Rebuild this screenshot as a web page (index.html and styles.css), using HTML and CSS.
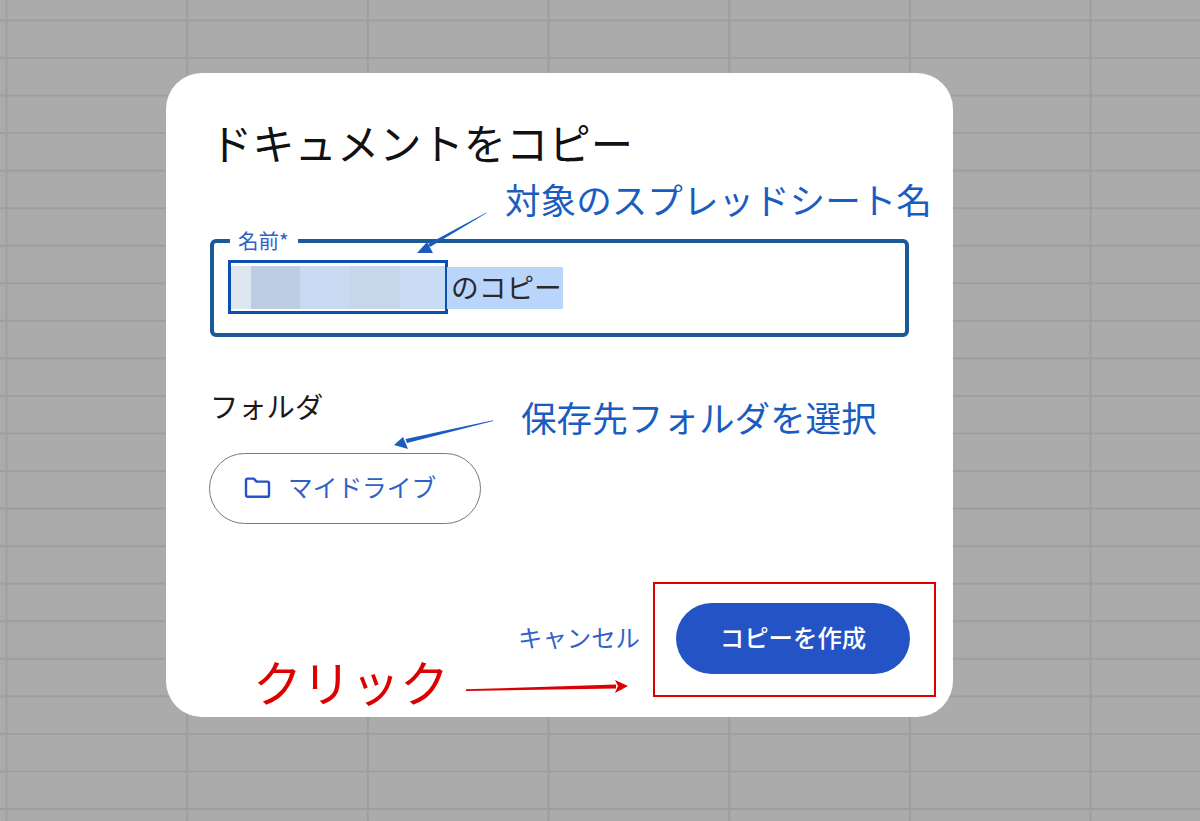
FILE: index.html
```html
<!DOCTYPE html>
<html lang="ja">
<head>
  <meta charset="utf-8">
  <title>ドキュメントをコピー</title>
  <link rel="stylesheet" href="styles.css">
</head>
<body>
  <div class="dialog">
    <h1 class="title">ドキュメントをコピー</h1>
    <div class="name-field">
      <span class="name-label">名前*</span>
      <div class="name-value">
        <div class="masked">
          <div class="tint tint-1"></div>
          <div class="tint tint-2"></div>
          <div class="tint tint-3"></div>
          <div class="tint tint-4"></div>
          <div class="tint tint-5"></div>
        </div>
        <span class="selected">のコピー</span>
      </div>
    </div>
    <div class="folder-label">フォルダ</div>
    <button class="folder-button">
      <svg class="folder-icon" xmlns="http://www.w3.org/2000/svg" viewBox="0 0 27 22" width="27" height="22" fill="none" stroke="#2453c6" stroke-width="2.4" stroke-linejoin="round">
        <path d="M2 3.2c0-.9.7-1.6 1.6-1.6h6.2l2.7 3h10.900c.9 0 1.600.7 1.600 1.600v12c0 .9-.7 1.600-1.600 1.600H3.600c-.9 0-1.600-.7-1.600-1.600z"/>
      </svg>
      <span class="folder-name">マイドライブ</span>
    </button>
    <div class="actions">
      <button class="cancel-button">キャンセル</button>
      <button class="create-button">コピーを作成</button>
    </div>

    <!-- annotations drawn on top of the dialog -->
    <div class="note note-name">対象のスプレッドシート名</div>
    <div class="note note-folder">保存先フォルダを選択</div>
    <div class="note-click">クリック</div>
    <div class="red-box"></div>
    <svg class="arrows" xmlns="http://www.w3.org/2000/svg" viewBox="0 0 787 644" width="787" height="644">
      <path d="M320 139.700 L320.300 140.300 L264 174 L262 171 Z" fill="#1a5cc0"/>
      <path d="M251 180 L261 169 L267 180 Z" fill="#1a5cc0"/>
      <path d="M327 347.300 L327.200 348 L241 370 L239.500 366 Z" fill="#1a5cc0"/>
      <path d="M228 372 L237 364 L242 376 Z" fill="#1a5cc0"/>
      <path d="M300 616.300 L450 611.500 L450 615.500 L300 618 Z" fill="#dd0000"/>
      <path d="M462 613 L449 607 L452 613 L449 620 Z" fill="#dd0000"/>
    </svg>
  </div>
</body>
</html>
```

FILE: styles.css
```css
html, body {
  height: 100%;
}
body {
  margin: 0;
  padding: 73px 0 0 166px;
  box-sizing: border-box;
  overflow: hidden;
  font-family: "Noto Sans CJK JP", "Noto Sans", sans-serif;
  background-color: #ababab;
  background-image:
    linear-gradient(to right, #9e9e9e 2px, transparent 2px),
    linear-gradient(to bottom, #9e9e9e 2px, transparent 2px);
  background-size: 180.7px 100%, 100% 37.55px;
  background-position: 5.500px 0, 0 19.500px;
}
button {
  font-family: inherit;
  cursor: pointer;
}
.dialog {
  position: relative;
  width: 787px;
  height: 644px;
  box-sizing: border-box;
  padding: 37px 44px 0 44px;
  background-color: #ffffff;
  border-radius: 36px;
  display: flex;
  flex-direction: column;
}
.title {
  margin: 0;
  font-size: 42.300px;
  line-height: 64px;
  font-weight: 400;
  color: #111111;
}
.name-field {
  position: relative;
  box-sizing: border-box;
  width: 699px;
  height: 98px;
  margin-top: 65px;
  border: 4px solid #1a5a96;
  border-radius: 6px;
  padding: 17px 0 0 14px;
}
.name-label {
  position: absolute;
  top: -17px;
  left: 16px;
  padding: 0 9px 0 8px;
  background-color: #ffffff;
  font-size: 20.500px;
  line-height: 28px;
  color: #2f62c8;
}
.name-value {
  display: flex;
  align-items: flex-end;
}
.masked {
  box-sizing: border-box;
  width: 220px;
  height: 54px;
  border: 3px solid #0b4fb3;
  padding: 3px 0 2px 0;
  display: flex;
}
.tint {
  height: 100%;
}
.tint-1 { width: 20px; background-color: #dde6ef; }
.tint-2 { width: 49px; background-color: #bccde3; }
.tint-3 { width: 50px; background-color: #c8daf2; }
.tint-4 { width: 50px; background-color: #c6d7ec; }
.tint-5 { flex: 1; background-color: #cadcf3; }
.selected {
  display: block;
  height: 42px;
  margin-bottom: 5px;
  margin-left: -1px;
  padding-left: 4px;
  width: 112px;
  background-color: #b9d5fb;
  font-size: 27.700px;
  line-height: 38px;
  color: #2a2a2a;
  white-space: nowrap;
}
.folder-label {
  margin: 49px 0 0 0;
  font-size: 28.300px;
  line-height: 40px;
  color: #1a1a1a;
}
.folder-button {
  box-sizing: border-box;
  width: 272px;
  height: 71px;
  margin: 27px 0 0 -1px;
  padding: 0 0 2px 34px;
  background: #ffffff;
  border: 1.500px solid #7a7a7a;
  border-radius: 36px;
  display: flex;
  align-items: center;
  gap: 17px;
  font-size: 24.700px;
  color: #2f62c8;
}
.folder-name {
  padding-bottom: 4px;
}
.actions {
  display: flex;
  justify-content: flex-end;
  align-items: center;
  gap: 36px;
  width: 700px;
  margin-top: 79px;
}
.cancel-button {
  padding: 0 0 4px 0;
  background: none;
  border: none;
  font-size: 24.400px;
  color: #2f62c8;
}
.create-button {
  width: 234px;
  height: 71px;
  padding: 0 0 4px 0;
  background-color: #2453c6;
  border: none;
  border-radius: 36px;
  font-size: 24.400px;
  font-weight: 500;
  color: #ffffff;
}
.note {
  position: absolute;
  color: #1a5cc0;
  white-space: nowrap;
}
.note-name {
  top: 100px;
  left: 339px;
  font-size: 35.600px;
  line-height: 52px;
}
.note-folder {
  top: 318px;
  left: 355px;
  font-size: 35.600px;
  line-height: 52px;
}
.note-click {
  position: absolute;
  top: 573px;
  left: 87px;
  font-size: 49px;
  line-height: 70px;
  color: #dd0000;
  white-space: nowrap;
}
.red-box {
  position: absolute;
  top: 509px;
  left: 487px;
  width: 283px;
  height: 115px;
  box-sizing: border-box;
  border: 2.500px solid #dd0000;
}
.arrows {
  position: absolute;
  top: 0;
  left: 0;
  pointer-events: none;
}
```
